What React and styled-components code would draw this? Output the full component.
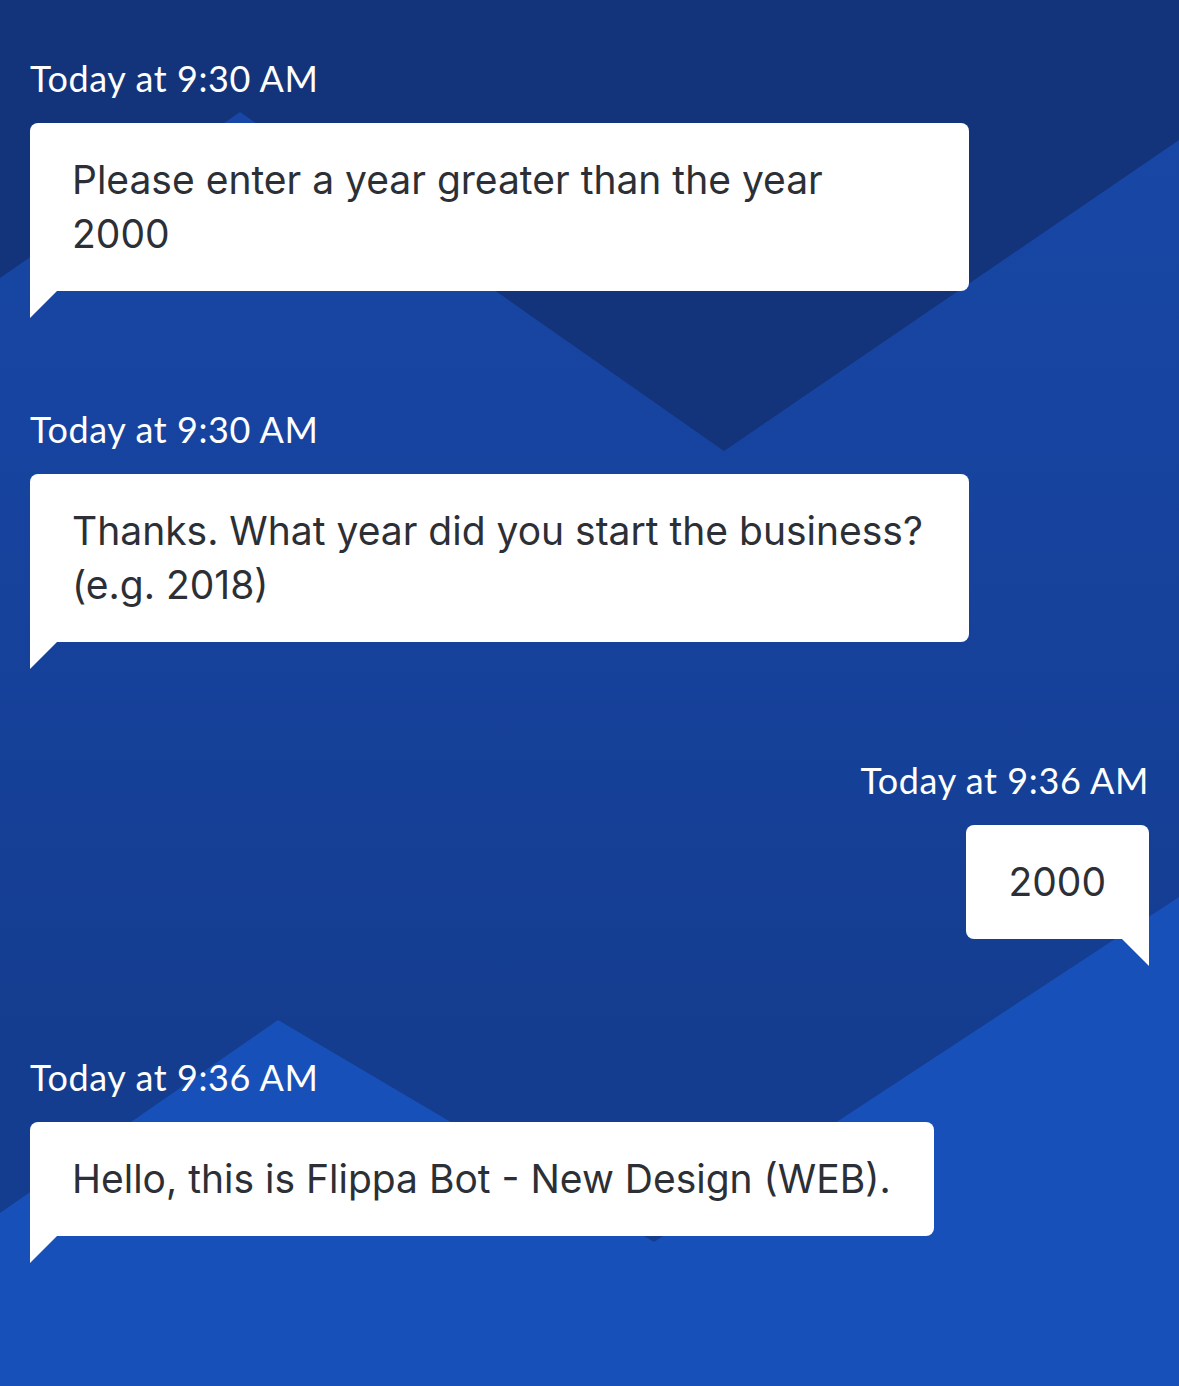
import styled, { createGlobalStyle } from "styled-components";

const GlobalStyle = createGlobalStyle`
  body {
    margin: 0;
    background: #133479;
  }
`;

const messages = [
  {
    id: 1,
    time: "Today at 9:30 AM",
    lines: ["Please enter a year greater than the year", "2000"],
    wide: true,
  },
  {
    id: 2,
    time: "Today at 9:30 AM",
    lines: ["Thanks. What year did you start the business?", "(e.g. 2018)"],
    wide: true,
  },
  { id: 3, time: "Today at 9:36 AM", lines: ["2000"], mine: true },
  {
    id: 4,
    time: "Today at 9:36 AM",
    lines: ["Hello, this is Flippa Bot - New Design (WEB)."],
  },
];

function Backdrop() {
  return (
    <BackdropSvg viewBox="0 0 1179 1386" preserveAspectRatio="none">
      <defs>
        <linearGradient id="base" x1="0" y1="0" x2="0" y2="1">
          <stop offset="0" stopColor="#1848a8" />
          <stop offset="0.5" stopColor="#16419a" />
          <stop offset="0.75" stopColor="#143d8f" />
          <stop offset="1" stopColor="#143d8f" />
        </linearGradient>
      </defs>
      <rect width="1179" height="1386" fill="url(#base)" />
      <polygon
        points="0,1213 278,1020 654,1242 1179,897 1179,1386 0,1386"
        fill="#1850b9"
      />
      <polygon
        points="0,0 1179,0 1179,140 724,451 240,112 0,278"
        fill="#13347a"
      />
    </BackdropSvg>
  );
}

export default function App() {
  return (
    <>
      <GlobalStyle />
      <Page>
        <Backdrop />
        <Chat>
          {messages.map((msg) => (
            <Group key={msg.id} $mine={msg.mine}>
              <Timestamp>{msg.time}</Timestamp>
              <Bubble $mine={msg.mine} $wide={msg.wide}>
                {msg.lines.map((line, i) => (
                  <Line key={i}>{line}</Line>
                ))}
              </Bubble>
            </Group>
          ))}
        </Chat>
      </Page>
    </>
  );
}

const Page = styled.div`
  position: relative;
  width: 1179px;
  min-height: 1386px;
  overflow: hidden;
`;

const BackdropSvg = styled.svg`
  position: absolute;
  inset: 0;
  width: 100%;
  height: 100%;
  z-index: 0;
`;

const Chat = styled.div`
  position: relative;
  z-index: 1;
  display: flex;
  flex-direction: column;
  padding: 58px 30px 0;
`;

const Group = styled.div`
  display: flex;
  flex-direction: column;
  align-items: ${(props) => (props.$mine ? "flex-end" : "flex-start")};
  margin-bottom: 118.5px;
`;

const Timestamp = styled.div`
  font-family: "Lato", "Open Sans", sans-serif;
  font-size: 36px;
  line-height: 40px;
  letter-spacing: 0.6px;
  color: #ffffff;
  margin-bottom: 25px;
`;

const Bubble = styled.div`
  position: relative;
  box-sizing: border-box;
  width: ${(props) => (props.$wide ? "939px" : "auto")};
  padding: 30px 43px 29.5px 42px;
  background: #ffffff;
  border-radius: ${(props) => (props.$mine ? "8px 8px 0 8px" : "8px 8px 8px 0")};
  font-family: "Inter", "Noto Sans", sans-serif;
  font-size: 39px;
  line-height: 54px;
  color: #2c3036;

  &::after {
    content: "";
    position: absolute;
    top: 100%;
    ${(props) => (props.$mine ? "right: 0;" : "left: 0;")}
    width: 0;
    height: 0;
    border-top: 27px solid #ffffff;
    ${(props) =>
      props.$mine
        ? "border-left: 27px solid transparent;"
        : "border-right: 27px solid transparent;"}
  }
`;

const Line = styled.div`
  white-space: nowrap;
`;
